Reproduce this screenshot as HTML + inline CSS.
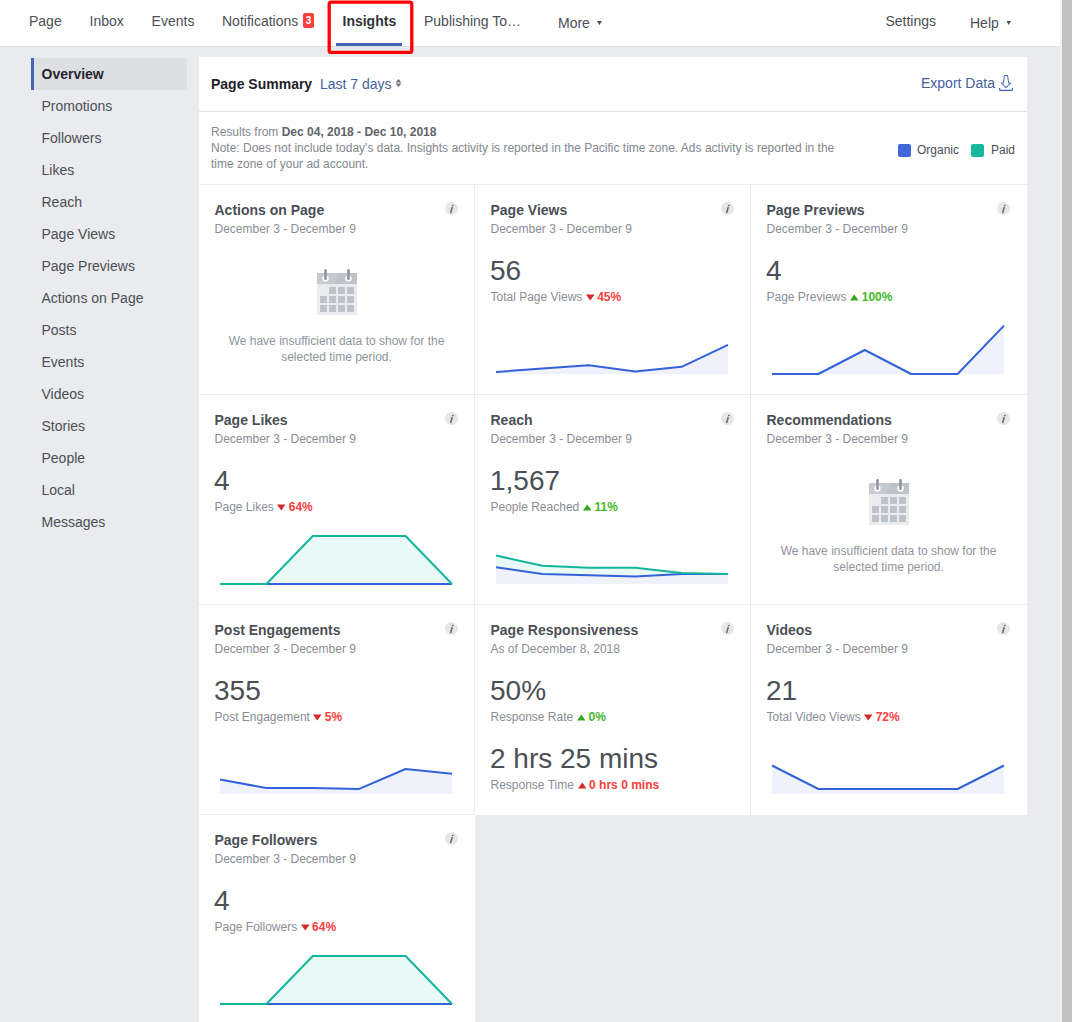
<!DOCTYPE html>
<html><head><meta charset="utf-8">
<style>
*{box-sizing:border-box}
html,body{margin:0;padding:0}
body{width:1072px;height:1022px;overflow:hidden;background:#e9ebee;position:relative;font-family:"Liberation Sans",sans-serif;color:#4b4f56}
.a{position:absolute;white-space:nowrap}
#nav{position:absolute;left:0;top:0;width:1060px;height:47px;background:#fff;border-bottom:1px solid #dddfe2}
.nv{position:absolute;top:13px;font-size:14px;line-height:16px;color:#4b4f56}
#sb{position:absolute;left:1060px;top:0;width:12px;height:1022px;background:#f1f1f1}
#sbt{position:absolute;left:1062px;top:0;width:10px;height:1022px;background:#c1c1c1}
.si{position:absolute;left:41.5px;font-size:14px;line-height:16px;color:#4b4f56}
#panel{position:absolute;left:199px;top:57px;width:828px;height:758px;background:#fff}
.card{position:absolute;width:276px;height:210px;background:#fff;border-right:1px solid #e9ebee;border-bottom:1px solid #e9ebee}
.ct{position:absolute;left:15.5px;top:17px;font-size:14px;line-height:16px;font-weight:bold;color:#4b4f56}
.cd{position:absolute;left:15.5px;top:37px;font-size:12px;line-height:14px;color:#898d94}
.cn{position:absolute;left:15px;top:70px;font-size:28px;line-height:32px;color:#4b4f56}
.cl{position:absolute;left:15.5px;top:105px;font-size:12px;line-height:14px;color:#898d94}
.dn{color:#fa3e3e;font-weight:bold}
.up{color:#42b72a;font-weight:bold}
.info{position:absolute;left:246px;top:17px}
.info span{position:absolute;left:4px;top:0;font-size:10px;line-height:13px;font-style:italic;font-weight:bold;color:#7f7f7f;font-family:"Liberation Serif",serif}
.ch{position:absolute;left:0;top:0}
.tri{display:inline-block;vertical-align:0;margin:0 3px 0 0}
.cal{position:absolute;left:116px;top:84px}
.nd{position:absolute;left:0;width:275px;top:148px;text-align:center;font-size:12px;line-height:16px;color:#90949c}
</style></head><body>
<div id="nav">
  <div class="nv" style="left:29px">Page</div>
  <div class="nv" style="left:89.5px">Inbox</div>
  <div class="nv" style="left:151.6px">Events</div>
  <div class="nv" style="left:222px">Notifications</div>
  <div class="nv" style="left:342.5px;font-weight:bold;color:#30343a">Insights</div>
  <div class="nv" style="left:424px">Publishing To…</div>
  <div class="nv" style="left:558px;top:15px">More</div>
  <div class="nv" style="left:885.4px">Settings</div>
  <div class="nv" style="left:970px;top:15px">Help</div>
  <div style="position:absolute;left:303px;top:13px;width:11px;height:15px;background:#fa3e3e;border-radius:2px;color:#fff;font-size:10px;line-height:16px;font-weight:bold;text-align:center;letter-spacing:0.3px;text-indent:0.3px">3</div>
  <div style="position:absolute;left:336px;top:43px;width:66px;height:3px;background:#4267b2"></div>
  <svg style="position:absolute;left:596px;top:20px" width="7" height="6" viewBox="0 0 7 6"><polygon points="0.8,1 6,1 3.4,5" fill="#4b4f56"/></svg>
  <svg style="position:absolute;left:1005px;top:20px" width="7" height="6" viewBox="0 0 7 6"><polygon points="1.5,1 6,1 3.75,5" fill="#4b4f56"/></svg>
</div>
<svg style="position:absolute;left:0;top:0" width="1072" height="60"><rect x="329.2" y="2.2" width="82.6" height="50.2" rx="2" fill="none" stroke="#ff0000" stroke-width="3.3"/></svg>
<div id="sb"></div><div id="sbt"></div>

<div style="position:absolute;left:31px;top:58px;width:156px;height:32px;background:#dddfe2;border-left:3px solid #4267b2"></div>
<div class="si" style="top:66px;font-weight:bold;color:#23272d">Overview</div>
<div class="si" style="top:98px">Promotions</div>
<div class="si" style="top:130px">Followers</div>
<div class="si" style="top:162px">Likes</div>
<div class="si" style="top:194px">Reach</div>
<div class="si" style="top:226px">Page Views</div>
<div class="si" style="top:258px">Page Previews</div>
<div class="si" style="top:290px">Actions on Page</div>
<div class="si" style="top:322px">Posts</div>
<div class="si" style="top:354px">Events</div>
<div class="si" style="top:386px">Videos</div>
<div class="si" style="top:418px">Stories</div>
<div class="si" style="top:450px">People</div>
<div class="si" style="top:482px">Local</div>
<div class="si" style="top:514px">Messages</div>

<div id="panel">
  <div class="a" style="left:12px;top:19px;font-size:14px;line-height:16px;font-weight:bold;color:#1d2129">Page Summary</div>
  <div class="a" style="left:121px;top:19px;font-size:14px;line-height:16px;color:#44619f">Last 7 days</div>
  <div class="a" style="left:722px;top:18px;font-size:14px;line-height:16px;color:#44619f">Export Data</div>
  <svg style="position:absolute;left:196px;top:22px" width="8" height="9" viewBox="0 0 8 9"><polygon points="0.5,3.5 6.5,3.5 3.5,0" fill="#6f737a"/><polygon points="0.5,4.5 6.5,4.5 3.5,8" fill="#6f737a"/></svg>
  <svg style="position:absolute;left:796px;top:15px" width="22" height="22" viewBox="0 0 22 22"><path d="M9.4,3.5 H12.6 L13.6,11 H15.6 L11,15.7 L6.4,11 H8.4 Z" fill="none" stroke="#4a6bb6" stroke-width="1.05" stroke-linejoin="round"/><path d="M4.6,16.4 V17.4 Q4.6,18.4 5.6,18.4 H16.4 Q17.4,18.4 17.4,17.4 V16.4" fill="none" stroke="#4267b2" stroke-width="1.2" stroke-linecap="round"/></svg>
  <div style="position:absolute;left:0;top:54px;width:828px;height:1px;background:#dddfe2"></div>
  <div class="a" style="left:12px;top:67px;font-size:12px;line-height:16px;color:#83878e;white-space:normal;width:640px">Results from <b style="color:#606469">Dec 04, 2018 - Dec 10, 2018</b><br>Note: Does not include today's data. Insights activity is reported in the Pacific time zone. Ads activity is reported in the time zone of your ad account.</div>
  <div style="position:absolute;left:699px;top:87px;width:13px;height:13px;background:#4066d8;border-radius:2px"></div>
  <div class="a" style="left:718px;top:85px;font-size:12px;line-height:16px;color:#4b4f56">Organic</div>
  <div style="position:absolute;left:772px;top:87px;width:13px;height:13px;background:#17b89e;border-radius:2px"></div>
  <div class="a" style="left:792px;top:85px;font-size:12px;line-height:16px;color:#4b4f56">Paid</div>
  <div style="position:absolute;left:0;top:127px;width:828px;height:1px;background:#e9ebee"></div>
<!--CARDS-->
<div class="card" style="left:0px;top:128px"><div class="ct">Actions on Page</div><svg class="info" width="13" height="13" viewBox="0 0 13 13"><circle cx="6.5" cy="6.5" r="6.5" fill="#e6e6e6"/><path d="M7.1,5.6 L5.8,10.4" stroke="#6f6f6f" stroke-width="1.7" stroke-linecap="round"/><ellipse cx="7.9" cy="3.5" rx="1" ry="0.8" fill="#6f6f6f"/></svg><div class="cd">December 3 - December 9</div><svg class="cal" width="44" height="50" viewBox="0 0 44 50">
<rect x="2" y="4" width="40" height="42" fill="#e9ebee"/>
<polygon points="2,4 42,4 42,15 2,15" fill="#bec3c9"/>
<polygon points="2,4 24.4,4 19.1,15 2,15" fill="#c6cad0"/>
<circle cx="10.4" cy="9.5" r="3.2" fill="#fff"/><circle cx="33.5" cy="9.5" r="3.2" fill="#fff"/>
<rect x="9.2" y="0" width="2.6" height="11" rx="1.3" fill="#90949c"/><rect x="32.2" y="0" width="2.6" height="11" rx="1.3" fill="#90949c"/>
<g fill="#bec3c9">
<rect x="14" y="18" width="7" height="7"/><rect x="23" y="18" width="7" height="7"/><rect x="32" y="18" width="7" height="7"/><rect x="5" y="27" width="7" height="7"/><rect x="14" y="27" width="7" height="7"/><rect x="23" y="27" width="7" height="7"/><rect x="32" y="27" width="7" height="7"/><rect x="5" y="36" width="7" height="7"/><rect x="14" y="36" width="7" height="7"/><rect x="23" y="36" width="7" height="7"/><rect x="32" y="36" width="7" height="7"/></g></svg><div class="nd">We have insufficient data to show for the<br>selected time period.</div></div>
<div class="card" style="left:276px;top:128px"><div class="ct">Page Views</div><svg class="info" width="13" height="13" viewBox="0 0 13 13"><circle cx="6.5" cy="6.5" r="6.5" fill="#e6e6e6"/><path d="M7.1,5.6 L5.8,10.4" stroke="#6f6f6f" stroke-width="1.7" stroke-linecap="round"/><ellipse cx="7.9" cy="3.5" rx="1" ry="0.8" fill="#6f6f6f"/></svg><div class="cd">December 3 - December 9</div><div class="cn">56</div><div class="cl">Total Page Views <svg class="tri" width="8.5" height="7" viewBox="0 0 8.5 7"><polygon points="0,0.5 8.5,0.5 4.25,6.5" fill="#d42a2a"/></svg><span class="dn">45%</span></div><svg class="ch" width="276" height="210" viewBox="0 0 276 210"><polygon points="21.0,189 21.0,187.0 67.4,183.6 113.8,180.3 160.2,186.6 206.6,181.8 253.0,159.9 253.0,189" fill="#eff2fc"/><polyline points="21.0,187.0 67.4,183.6 113.8,180.3 160.2,186.6 206.6,181.8 253.0,159.9" fill="none" stroke="#3462d8" stroke-width="2" stroke-linejoin="round"/></svg></div>
<div class="card" style="left:552px;top:128px;border-right:none"><div class="ct">Page Previews</div><svg class="info" width="13" height="13" viewBox="0 0 13 13"><circle cx="6.5" cy="6.5" r="6.5" fill="#e6e6e6"/><path d="M7.1,5.6 L5.8,10.4" stroke="#6f6f6f" stroke-width="1.7" stroke-linecap="round"/><ellipse cx="7.9" cy="3.5" rx="1" ry="0.8" fill="#6f6f6f"/></svg><div class="cd">December 3 - December 9</div><div class="cn">4</div><div class="cl">Page Previews <svg class="tri" style="margin-left:0.4px" width="8.5" height="7" viewBox="0 0 8.5 7"><polygon points="0,6.5 4.25,0.5 8.5,6.5" fill="#3aa620"/></svg><span class="up">100%</span></div><svg class="ch" width="276" height="210" viewBox="0 0 276 210"><polygon points="21.0,189 21.0,189.0 67.4,189.0 113.8,165.0 160.2,189.0 206.6,189.0 253.0,141.5 253.0,189" fill="#eff2fc"/><polyline points="21.0,189.0 67.4,189.0 113.8,165.0 160.2,189.0 206.6,189.0 253.0,140.6" fill="none" stroke="#3462d8" stroke-width="2" stroke-linejoin="round"/></svg></div>
<div class="card" style="left:0px;top:338px"><div class="ct">Page Likes</div><svg class="info" width="13" height="13" viewBox="0 0 13 13"><circle cx="6.5" cy="6.5" r="6.5" fill="#e6e6e6"/><path d="M7.1,5.6 L5.8,10.4" stroke="#6f6f6f" stroke-width="1.7" stroke-linecap="round"/><ellipse cx="7.9" cy="3.5" rx="1" ry="0.8" fill="#6f6f6f"/></svg><div class="cd">December 3 - December 9</div><div class="cn">4</div><div class="cl">Page Likes <svg class="tri" width="8.5" height="7" viewBox="0 0 8.5 7"><polygon points="0,0.5 8.5,0.5 4.25,6.5" fill="#d42a2a"/></svg><span class="dn">64%</span></div><svg class="ch" width="276" height="210" viewBox="0 0 276 210"><polygon points="21.0,189 21.0,189.0 67.4,189.0 113.8,141.0 160.2,141.0 206.6,141.0 253.0,189.0 253.0,189" fill="#e9f9f6"/><polyline points="21.0,189.0 67.4,189.0 113.8,189.0 160.2,189.0 206.6,189.0 253.0,189.0" fill="none" stroke="#3462d8" stroke-width="2" stroke-linejoin="round"/><polyline points="21.0,189.0 67.4,189.0 113.8,141.0 160.2,141.0 206.6,141.0 253.0,189.0" fill="none" stroke="#13b59c" stroke-width="2" stroke-linejoin="round"/></svg></div>
<div class="card" style="left:276px;top:338px"><div class="ct">Reach</div><svg class="info" width="13" height="13" viewBox="0 0 13 13"><circle cx="6.5" cy="6.5" r="6.5" fill="#e6e6e6"/><path d="M7.1,5.6 L5.8,10.4" stroke="#6f6f6f" stroke-width="1.7" stroke-linecap="round"/><ellipse cx="7.9" cy="3.5" rx="1" ry="0.8" fill="#6f6f6f"/></svg><div class="cd">December 3 - December 9</div><div class="cn">1,567</div><div class="cl">People Reached <svg class="tri" style="margin-left:0.4px" width="8.5" height="7" viewBox="0 0 8.5 7"><polygon points="0,6.5 4.25,0.5 8.5,6.5" fill="#3aa620"/></svg><span class="up">11%</span></div><svg class="ch" width="276" height="210" viewBox="0 0 276 210"><polygon points="21.0,189 21.0,160.5 67.4,170.8 113.8,172.7 160.2,172.7 206.6,178.0 253.0,179.0 253.0,189" fill="#e9f9f6"/><polygon points="21.0,189 21.0,172.2 67.4,179.0 113.8,180.3 160.2,181.6 206.6,179.0 253.0,179.0 253.0,189" fill="#eff2fc"/><polyline points="21.0,172.2 67.4,179.0 113.8,180.3 160.2,181.6 206.6,179.0 253.0,179.0" fill="none" stroke="#3462d8" stroke-width="2" stroke-linejoin="round"/><polyline points="21.0,160.5 67.4,170.8 113.8,172.7 160.2,172.7 206.6,178.0 253.0,179.0" fill="none" stroke="#13b59c" stroke-width="2" stroke-linejoin="round"/></svg></div>
<div class="card" style="left:552px;top:338px;border-right:none"><div class="ct">Recommendations</div><svg class="info" width="13" height="13" viewBox="0 0 13 13"><circle cx="6.5" cy="6.5" r="6.5" fill="#e6e6e6"/><path d="M7.1,5.6 L5.8,10.4" stroke="#6f6f6f" stroke-width="1.7" stroke-linecap="round"/><ellipse cx="7.9" cy="3.5" rx="1" ry="0.8" fill="#6f6f6f"/></svg><div class="cd">December 3 - December 9</div><svg class="cal" width="44" height="50" viewBox="0 0 44 50">
<rect x="2" y="4" width="40" height="42" fill="#e9ebee"/>
<polygon points="2,4 42,4 42,15 2,15" fill="#bec3c9"/>
<polygon points="2,4 24.4,4 19.1,15 2,15" fill="#c6cad0"/>
<circle cx="10.4" cy="9.5" r="3.2" fill="#fff"/><circle cx="33.5" cy="9.5" r="3.2" fill="#fff"/>
<rect x="9.2" y="0" width="2.6" height="11" rx="1.3" fill="#90949c"/><rect x="32.2" y="0" width="2.6" height="11" rx="1.3" fill="#90949c"/>
<g fill="#bec3c9">
<rect x="14" y="18" width="7" height="7"/><rect x="23" y="18" width="7" height="7"/><rect x="32" y="18" width="7" height="7"/><rect x="5" y="27" width="7" height="7"/><rect x="14" y="27" width="7" height="7"/><rect x="23" y="27" width="7" height="7"/><rect x="32" y="27" width="7" height="7"/><rect x="5" y="36" width="7" height="7"/><rect x="14" y="36" width="7" height="7"/><rect x="23" y="36" width="7" height="7"/><rect x="32" y="36" width="7" height="7"/></g></svg><div class="nd">We have insufficient data to show for the<br>selected time period.</div></div>
<div class="card" style="left:0px;top:548px"><div class="ct">Post Engagements</div><svg class="info" width="13" height="13" viewBox="0 0 13 13"><circle cx="6.5" cy="6.5" r="6.5" fill="#e6e6e6"/><path d="M7.1,5.6 L5.8,10.4" stroke="#6f6f6f" stroke-width="1.7" stroke-linecap="round"/><ellipse cx="7.9" cy="3.5" rx="1" ry="0.8" fill="#6f6f6f"/></svg><div class="cd">December 3 - December 9</div><div class="cn">355</div><div class="cl">Post Engagement <svg class="tri" width="8.5" height="7" viewBox="0 0 8.5 7"><polygon points="0,0.5 8.5,0.5 4.25,6.5" fill="#d42a2a"/></svg><span class="dn">5%</span></div><svg class="ch" width="276" height="210" viewBox="0 0 276 210"><polygon points="21.0,189 21.0,174.6 67.4,183.0 113.8,183.0 160.2,183.9 206.6,164.0 253.0,168.8 253.0,189" fill="#eff2fc"/><polyline points="21.0,174.6 67.4,183.0 113.8,183.0 160.2,183.9 206.6,164.0 253.0,168.8" fill="none" stroke="#3462d8" stroke-width="2" stroke-linejoin="round"/></svg></div>
<div class="card" style="left:276px;top:548px;border-bottom:none"><div class="ct">Page Responsiveness</div><svg class="info" width="13" height="13" viewBox="0 0 13 13"><circle cx="6.5" cy="6.5" r="6.5" fill="#e6e6e6"/><path d="M7.1,5.6 L5.8,10.4" stroke="#6f6f6f" stroke-width="1.7" stroke-linecap="round"/><ellipse cx="7.9" cy="3.5" rx="1" ry="0.8" fill="#6f6f6f"/></svg><div class="cd">As of December 8, 2018</div><div class="cn">50%</div><div class="cl">Response Rate <svg class="tri" style="margin-left:0.4px" width="8.5" height="7" viewBox="0 0 8.5 7"><polygon points="0,6.5 4.25,0.5 8.5,6.5" fill="#3aa620"/></svg><span class="up">0%</span></div><div class="cn" style="top:138px">2 hrs 25 mins</div><div class="cl" style="top:173px">Response Time <svg class="tri" style="margin-left:0.4px" width="8.5" height="7" viewBox="0 0 8.5 7"><polygon points="0,6.5 4.25,0.5 8.5,6.5" fill="#d42a2a"/></svg><span class="dn">0 hrs 0 mins</span></div></div>
<div class="card" style="left:552px;top:548px;border-right:none;border-bottom:none"><div class="ct">Videos</div><svg class="info" width="13" height="13" viewBox="0 0 13 13"><circle cx="6.5" cy="6.5" r="6.5" fill="#e6e6e6"/><path d="M7.1,5.6 L5.8,10.4" stroke="#6f6f6f" stroke-width="1.7" stroke-linecap="round"/><ellipse cx="7.9" cy="3.5" rx="1" ry="0.8" fill="#6f6f6f"/></svg><div class="cd">December 3 - December 9</div><div class="cn">21</div><div class="cl">Total Video Views <svg class="tri" width="8.5" height="7" viewBox="0 0 8.5 7"><polygon points="0,0.5 8.5,0.5 4.25,6.5" fill="#d42a2a"/></svg><span class="dn">72%</span></div><svg class="ch" width="276" height="210" viewBox="0 0 276 210"><polygon points="21.0,189 21.0,160.5 67.4,184.0 113.8,184.0 160.2,184.0 206.6,184.0 253.0,160.5 253.0,189" fill="#eff2fc"/><polyline points="21.0,160.5 67.4,184.0 113.8,184.0 160.2,184.0 206.6,184.0 253.0,160.5" fill="none" stroke="#3462d8" stroke-width="2" stroke-linejoin="round"/></svg></div>
<div class="card" style="left:0px;top:758px;border-right:none"><div class="ct">Page Followers</div><svg class="info" width="13" height="13" viewBox="0 0 13 13"><circle cx="6.5" cy="6.5" r="6.5" fill="#e6e6e6"/><path d="M7.1,5.6 L5.8,10.4" stroke="#6f6f6f" stroke-width="1.7" stroke-linecap="round"/><ellipse cx="7.9" cy="3.5" rx="1" ry="0.8" fill="#6f6f6f"/></svg><div class="cd">December 3 - December 9</div><div class="cn">4</div><div class="cl">Page Followers <svg class="tri" width="8.5" height="7" viewBox="0 0 8.5 7"><polygon points="0,0.5 8.5,0.5 4.25,6.5" fill="#d42a2a"/></svg><span class="dn">64%</span></div><svg class="ch" width="276" height="210" viewBox="0 0 276 210"><polygon points="21.0,189 21.0,189.0 67.4,189.0 113.8,141.0 160.2,141.0 206.6,141.0 253.0,189.0 253.0,189" fill="#e9f9f6"/><polyline points="21.0,189.0 67.4,189.0 113.8,189.0 160.2,189.0 206.6,189.0 253.0,189.0" fill="none" stroke="#3462d8" stroke-width="2" stroke-linejoin="round"/><polyline points="21.0,189.0 67.4,189.0 113.8,141.0 160.2,141.0 206.6,141.0 253.0,189.0" fill="none" stroke="#13b59c" stroke-width="2" stroke-linejoin="round"/></svg></div>
<!--/CARDS-->
</div>
</body></html>
